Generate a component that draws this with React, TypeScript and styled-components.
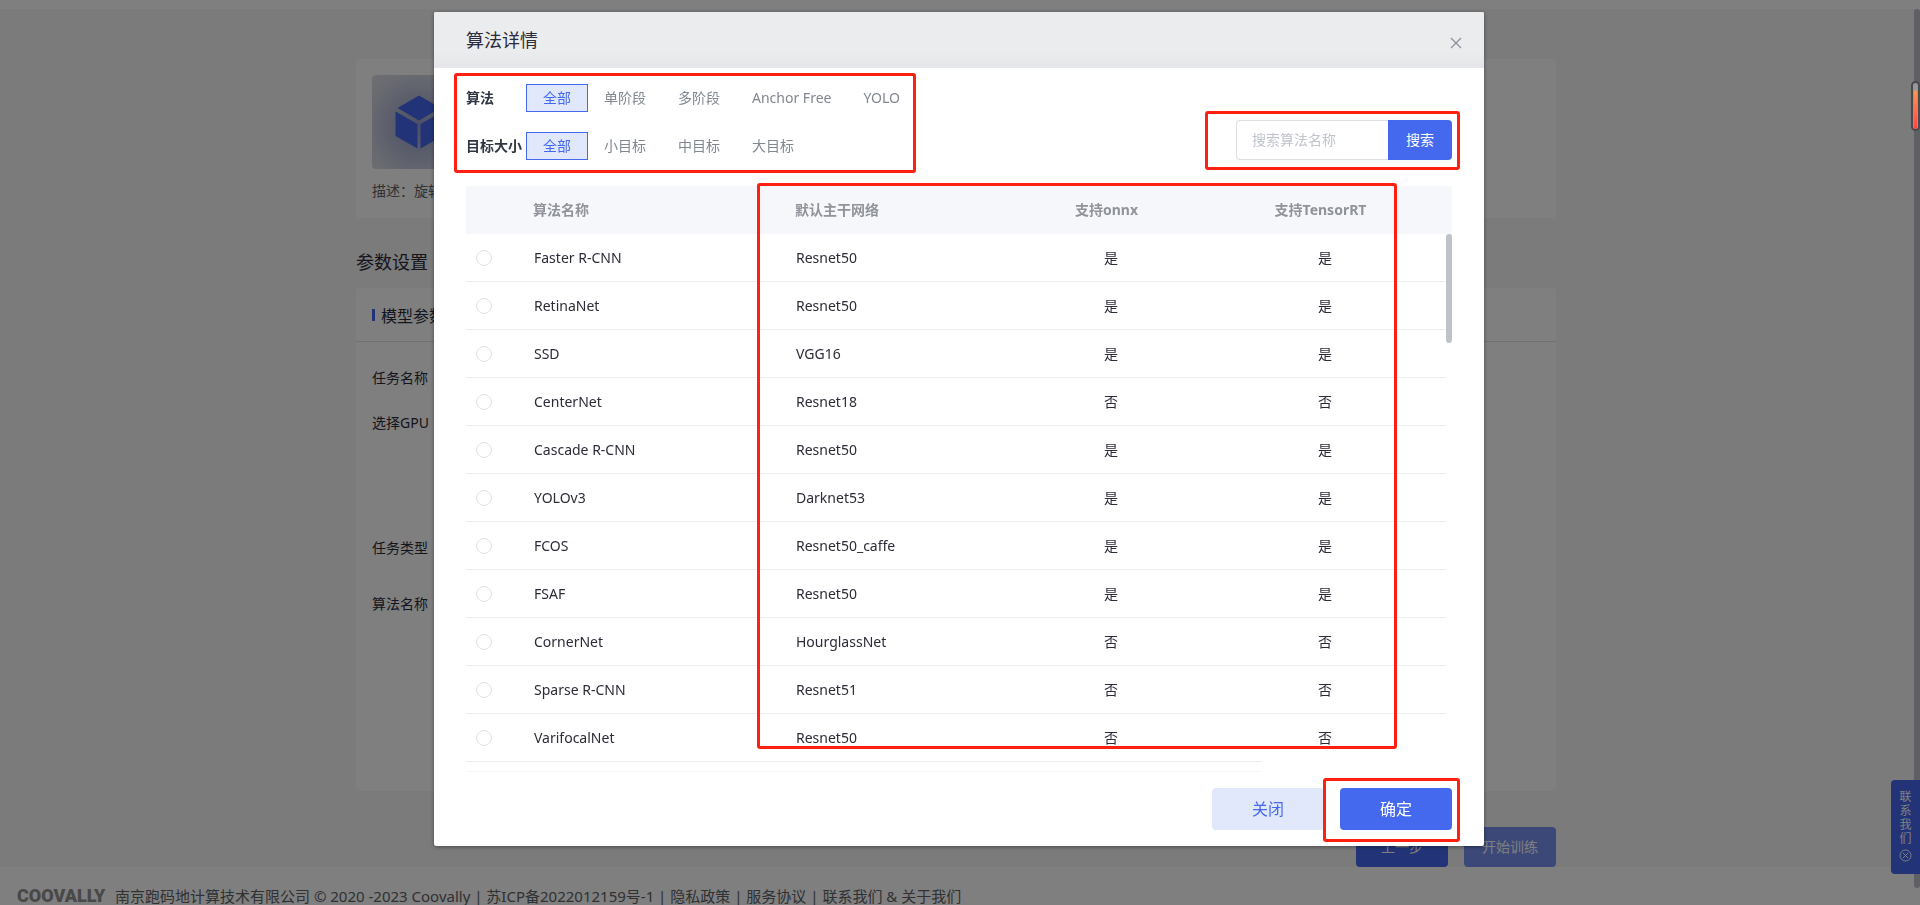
import React from "react";
import styled, { createGlobalStyle, css } from "styled-components";

const color = {
  primary: "#4569ee",
  primarySoft: "#e1e8fc",
  text: "#2b2b3a",
  muted: "#808791",
  heading: "#909399",
  line: "#ebedf2",
  mark: "#ff2012",
};

const GlobalStyle = createGlobalStyle`
  *, *::before, *::after { box-sizing: border-box; }
  body {
    margin: 0;
    overflow: hidden;
    color: ${color.text};
    font-family: "Noto Sans", "Noto Sans CJK SC", sans-serif;
    font-size: 14px;
  }
  button, input { font-family: inherit; font-size: 14px; }
  button { border: 0; padding: 0 0 2px; cursor: pointer; }
`;

/* ---------- page behind the dialog ---------- */

const Page = styled.div`
  height: 100vh;
  overflow: hidden;
  display: flex;
  flex-direction: column;
  background: #f6f6f6;
`;

const TopBar = styled.header`
  flex: none;
  height: 9px;
  background: #fff;
`;

const Main = styled.main`
  flex: none;
  width: 100%;
  max-width: 1208px;
  margin: 0 auto;
  padding: 50px 8px 0 0;
`;

const Card = styled.section`
  background: #fff;
  border-radius: 4px;
`;

const SummaryCard = styled(Card)`
  height: 159px;
  padding: 16px;
`;

const Tile = styled.div`
  width: 94px;
  height: 94px;
  border-radius: 4px;
  display: grid;
  place-items: center;
  background: radial-gradient(circle at 50% 55%, #9aa1cc 0%, #b9bed8 45%, #d3d6e2 75%, #dddfe6 100%);
`;

const Description = styled.p`
  margin: 12px 0 0;
  line-height: 20px;
  color: #606266;
`;

const SectionTitle = styled.h2`
  margin: 32px 0 14px;
  font-size: 18px;
  font-weight: 400;
  line-height: 24px;
`;

const SettingsCard = styled(Card)`
  height: 503px;
`;

const SettingsHead = styled.h3`
  margin: 0;
  height: 54px;
  padding: 0 16px;
  display: flex;
  align-items: center;
  gap: 6px;
  border-bottom: 1px solid #e2e2e2;
  font-size: 16px;
  font-weight: 400;

  &::before {
    content: "";
    width: 3px;
    height: 12px;
    background: ${color.primary};
  }
`;

const FieldList = styled.div`
  padding: 26px 16px;
`;

const Field = styled.div<{ $after: number }>`
  line-height: 20px;
  margin-bottom: ${(p) => p.$after}px;
`;

const PageActions = styled.div`
  display: flex;
  justify-content: flex-end;
  gap: 16px;
  padding-top: 36px;
`;

const PageButton = styled.button<{ $faded?: boolean }>`
  width: 92px;
  height: 40px;
  border-radius: 4px;
  color: #fff;
  background: ${color.primary};
  opacity: ${(p) => (p.$faded ? 0.7 : 1)};
`;

const Footer = styled.footer`
  flex: none;
  display: flex;
  align-items: center;
  gap: 8px;
  height: 56px;
  padding: 0 17px;
  background: #fff;
  color: #606266;
  font-size: 15px;
  white-space: nowrap;
`;

const Brand = styled.strong`
  width: 90px;
  font-family: Roboto, sans-serif;
  font-size: 18px;
  font-weight: 900;
  color: #909090;
`;

const ScrollTrack = styled.div`
  position: fixed;
  top: 9px;
  right: 0;
  width: 6px;
  height: calc(100vh - 26px);
  border-radius: 3px;
  background: #bdc1ca;
`;

const ContactTab = styled.button`
  position: fixed;
  right: 0;
  bottom: 31px;
  width: 29px;
  height: 94px;
  border-radius: 4px 0 0 4px;
  display: flex;
  flex-direction: column;
  align-items: center;
  justify-content: center;
  background: ${color.primary};
  color: #fff;
  font-size: 12px;
  line-height: 14px;

  span { width: 12px; }
  svg { margin-top: 3px; }
`;

const Gauge = styled.div`
  position: fixed;
  z-index: 3;
  top: 81px;
  right: 0;
  width: 9px;
  height: 50px;
  padding-top: 7px;
  border: 2px solid #4a4a4c;
  border-radius: 5px;
  background: #97989a;

  &::before {
    content: "";
    display: block;
    width: 3px;
    height: 39px;
    margin: 0 auto;
    border-radius: 2px;
    background: linear-gradient(#f79a55, #ff4444);
  }
`;

/* ---------- dialog ---------- */

const Overlay = styled.div`
  position: fixed;
  z-index: 2;
  inset: 0;
  display: flex;
  align-items: flex-start;
  justify-content: center;
  padding: 12px 2px 0 0;
  background: rgba(0, 0, 0, 0.5);
`;

const Dialog = styled.div`
  width: 1050px;
  max-width: 96vw;
  border-radius: 2px;
  background: #fff;
  box-shadow: 0 1px 4px rgba(0, 0, 0, 0.4);
`;

const DialogHead = styled.header`
  display: flex;
  align-items: center;
  justify-content: space-between;
  height: 56px;
  padding: 0 22px 0 32px;
  border-radius: 2px 2px 0 0;
  background: linear-gradient(#ebecee 0%, #ebecee 70%, #e5e6e9 100%);
`;

const DialogTitle = styled.h1`
  margin: 0;
  font-size: 18px;
  font-weight: 400;
  line-height: 24px;
`;

const CloseButton = styled.button`
  display: grid;
  place-items: center;
  width: 12px;
  height: 12px;
  margin-top: 6px;
  padding: 0;
  background: none;
`;

const DialogBody = styled.div`
  padding: 5px 32px 16px;
`;

const Marked = styled.div`
  position: relative;
`;

const Mark = styled.span<{ $inset: string; $width?: number }>`
  position: absolute;
  z-index: 1;
  inset: ${(p) => p.$inset};
  ${(p) => p.$width && `width: ${p.$width}px;`}
  border: 3px solid ${color.mark};
  border-radius: 3px;
  pointer-events: none;
`;

const Tools = styled.div`
  display: flex;
  align-items: center;
  justify-content: space-between;
  padding: 11px 0 26px;
`;

const Filters = styled(Marked)`
  display: flex;
  flex-direction: column;
  gap: 20px;
`;

const FilterRow = styled.div`
  display: flex;
  align-items: center;
  height: 28px;
`;

const FilterLabel = styled.span`
  width: 60px;
  padding-bottom: 2px;
  color: #303643;
  font-weight: 700;
  white-space: nowrap;
`;

const FilterOption = styled.button<{ $active?: boolean }>`
  height: 28px;
  padding: 0 16px 2px;
  color: ${color.muted};
  background: none;
  white-space: nowrap;
  ${(p) =>
    p.$active &&
    css`
      color: ${color.primary};
      background: ${color.primarySoft};
      border: 1px solid ${color.primary};
    `}
`;

const Search = styled(Marked)`
  display: flex;
  margin-top: 36px;
`;

const SearchInput = styled.input`
  width: 152px;
  height: 40px;
  padding: 0 15px 2px;
  border: 1px solid #dcdfe6;
  border-right: 0;
  border-radius: 4px 0 0 4px;
  outline: 0;

  &::placeholder { color: #c0c4cc; }
`;

const SearchButton = styled.button`
  width: 64px;
  height: 40px;
  border-radius: 0 4px 4px 0;
  color: #fff;
  background: ${color.primary};
`;

const TableArea = styled(Marked)`
  padding-bottom: 9px;
  border-bottom: 1px solid #f6f6f6;
`;

const Table = styled.table`
  width: 100%;
  table-layout: fixed;
  border-collapse: separate;
  border-spacing: 0;
`;

const Col = styled.col<{ $w?: number }>`
  ${(p) => p.$w && `width: ${p.$w}px;`}
`;

const HeadCell = styled.th<{ $center?: boolean }>`
  height: 48px;
  padding: ${(p) => (p.$center ? "0 9px 2px 0" : "0 9px 2px")};
  color: ${color.heading};
  background: #f5f7fb;
  font-size: 14px;
  font-weight: 700;
  text-align: ${(p) => (p.$center ? "center" : "left")};
`;

const Cell = styled.td<{ $center?: boolean; $bare?: boolean }>`
  height: 48px;
  padding: ${(p) => (p.$center ? "0 0 2px" : "0 10px")};
  border-bottom: ${(p) => (p.$bare ? "0" : `1px solid ${color.line}`)};
  text-align: ${(p) => (p.$center ? "center" : "left")};
`;

const Radio = styled.input`
  appearance: none;
  display: block;
  width: 16px;
  height: 16px;
  margin: 0;
  border: 1px solid #dfdfe8;
  border-radius: 50%;
  background: #fff;

  &:checked { border: 5px solid ${color.primary}; }
`;

const ListThumb = styled.span`
  position: absolute;
  top: 48px;
  right: 0;
  width: 6px;
  height: 109px;
  border-radius: 3px;
  background: #bdc3c9;
`;

const ListFade = styled.span`
  position: absolute;
  right: 0;
  bottom: -1px;
  width: 190px;
  height: 14px;
  background: #fff;
`;

const DialogActions = styled.footer`
  position: relative;
  display: flex;
  justify-content: flex-end;
  gap: 16px;
  padding-top: 16px;
`;

const ActionButton = styled.button<{ $primary?: boolean }>`
  width: 112px;
  height: 42px;
  border-radius: 4px;
  font-size: 16px;
  color: ${(p) => (p.$primary ? "#fff" : color.primary)};
  background: ${(p) => (p.$primary ? color.primary : color.primarySoft)};
`;

const algorithms: [string, string, string, string][] = [
  ["Faster R-CNN", "Resnet50", "是", "是"],
  ["RetinaNet", "Resnet50", "是", "是"],
  ["SSD", "VGG16", "是", "是"],
  ["CenterNet", "Resnet18", "否", "否"],
  ["Cascade R-CNN", "Resnet50", "是", "是"],
  ["YOLOv3", "Darknet53", "是", "是"],
  ["FCOS", "Resnet50_caffe", "是", "是"],
  ["FSAF", "Resnet50", "是", "是"],
  ["CornerNet", "HourglassNet", "否", "否"],
  ["Sparse R-CNN", "Resnet51", "否", "否"],
  ["VarifocalNet", "Resnet50", "否", "否"],
];

const filters = [
  { label: "算法", options: ["全部", "单阶段", "多阶段", "Anchor Free", "YOLO"] },
  { label: "目标大小", options: ["全部", "小目标", "中目标", "大目标"] },
];

const CubeIcon = () => (
  <svg width="48" height="54" viewBox="0 0 48 54" fill={color.primary} aria-hidden="true">
    <path d="M24 0.500 45.500 13 24 25.500 2.500 13Z" />
    <path d="M0.500 16.500 22.500 29V53.500L0.500 41Z" />
    <path d="M47.500 16.500 25.500 29V53.500L47.500 41Z" />
  </svg>
);

const CrossIcon = () => (
  <svg width="12" height="12" viewBox="0 0 12 12" stroke="#8b9099" strokeWidth="1.200" aria-hidden="true">
    <path d="M1 1 11 11M11 1 1 11" />
  </svg>
);

const CircleCrossIcon = () => (
  <svg width="13" height="13" viewBox="0 0 13 13" fill="none" stroke="currentColor" aria-hidden="true">
    <circle cx="6.500" cy="6.500" r="5.500" />
    <path d="M4 4 9 9M9 4 4 9" />
  </svg>
);

export default function App() {
  return (
    <>
      <GlobalStyle />
      <Page>
        <TopBar />
        <Main>
          <SummaryCard>
            <Tile>
              <CubeIcon />
            </Tile>
            <Description>描述：旋转</Description>
          </SummaryCard>
          <SectionTitle>参数设置</SectionTitle>
          <SettingsCard>
            <SettingsHead>模型参数</SettingsHead>
            <FieldList>
              <Field $after={25}>任务名称</Field>
              <Field $after={105}>选择GPU</Field>
              <Field $after={36}>任务类型</Field>
              <Field $after={0}>算法名称</Field>
            </FieldList>
          </SettingsCard>
          <PageActions>
            <PageButton>上一步</PageButton>
            <PageButton $faded>开始训练</PageButton>
          </PageActions>
        </Main>
        <Footer>
          <Brand>COOVALLY</Brand>
          <span>
            南京跑码地计算技术有限公司 © 2020 -2023 Coovally | 苏ICP备2022012159号-1 | 隐私政策 | 服务协议 | 联系我们 &amp; 关于我们
          </span>
        </Footer>
        <ScrollTrack />
        <ContactTab>
          <span>联系我们</span>
          <CircleCrossIcon />
        </ContactTab>
      </Page>

      <Overlay>
        <Dialog role="dialog" aria-labelledby="dialog-title">
          <DialogHead>
            <DialogTitle id="dialog-title">算法详情</DialogTitle>
            <CloseButton aria-label="关闭窗口">
              <CrossIcon />
            </CloseButton>
          </DialogHead>
          <DialogBody>
            <Tools>
              <Filters>
                {filters.map((f) => (
                  <FilterRow key={f.label}>
                    <FilterLabel>{f.label}</FilterLabel>
                    {f.options.map((o, i) => (
                      <FilterOption key={o} $active={i === 0}>
                        {o}
                      </FilterOption>
                    ))}
                  </FilterRow>
                ))}
                <Mark $inset="-11px 0 -13px -12px" />
              </Filters>
              <Search>
                <SearchInput aria-label="搜索算法名称" placeholder="搜索算法名称" />
                <SearchButton>搜索</SearchButton>
                <Mark $inset="-9px -8px -10px -31px" />
              </Search>
            </Tools>
            <TableArea>
              <Table>
                <colgroup>
                  <Col $w={58} />
                  <Col />
                  <Col $w={218} />
                  <Col $w={214} />
                  <Col $w={214} />
                  <Col $w={14} />
                  <Col $w={6} />
                </colgroup>
                <thead>
                  <tr>
                    <HeadCell />
                    <HeadCell scope="col">算法名称</HeadCell>
                    <HeadCell scope="col">默认主干网络</HeadCell>
                    <HeadCell scope="col" $center>支持onnx</HeadCell>
                    <HeadCell scope="col" $center>支持TensorRT</HeadCell>
                    <HeadCell colSpan={2} />
                  </tr>
                </thead>
                <tbody>
                  {algorithms.map(([name, backbone, onnx, trt]) => (
                    <tr key={name}>
                      <Cell>
                        <Radio type="radio" name="algorithm" aria-label={name} />
                      </Cell>
                      <Cell>{name}</Cell>
                      <Cell>{backbone}</Cell>
                      <Cell $center>{onnx}</Cell>
                      <Cell $center>{trt}</Cell>
                      <Cell $center />
                      <Cell $center $bare />
                    </tr>
                  ))}
                </tbody>
              </Table>
              <ListThumb />
              <ListFade />
              <Mark $inset="-3px 55px 22px 291px" />
            </TableArea>
            <DialogActions>
              <ActionButton>关闭</ActionButton>
              <ActionButton $primary>确定</ActionButton>
              <Mark $inset="6px -8px -12px auto" $width={137} />
            </DialogActions>
          </DialogBody>
        </Dialog>
      </Overlay>
      <Gauge />
    </>
  );
}
